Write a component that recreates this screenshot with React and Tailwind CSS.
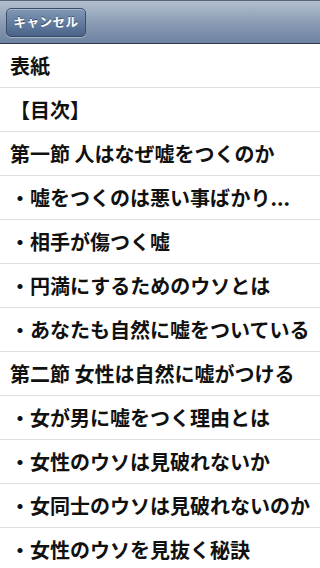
const items = [
  '表紙',
  '【目次】',
  '第一節 人はなぜ嘘をつくのか',
  '・嘘をつくのは悪い事ばかり...',
  '・相手が傷つく嘘',
  '・円満にするためのウソとは',
  '・あなたも自然に嘘をついている',
  '第二節 女性は自然に嘘がつける',
  '・女が男に嘘をつく理由とは',
  '・女性のウソは見破れないか',
  '・女同士のウソは見破れないのか',
  '・女性のウソを見抜く秘訣',
];

export default function App() {
  return (
    <div className="w-[320px] h-[568px] overflow-hidden bg-white font-['Noto_Sans_CJK_JP',sans-serif]">
      <header className="h-[44px] flex items-center px-[6px] border-t border-[#56657a] border-b border-b-[#2d3642] bg-gradient-to-b from-[#b3bfcf] via-[#8c9db5] to-[#6c83a1]">
        <button className="w-[80px] h-[29px] flex items-center justify-center rounded-[5px] border border-[#3b4c66] bg-gradient-to-b from-[#8198b6] to-[#4a6389] text-white text-[12.5px] tracking-[0.5px] font-bold leading-none shadow-[inset_0_1px_0_rgba(255,255,255,0.3),0_1px_0_rgba(255,255,255,0.35)] [text-shadow:0_-1px_0_rgba(0,0,0,0.45)]">
          キャンセル
        </button>
      </header>
      <ul>
        {items.map((item) => (
          <li
            key={item}
            className="h-[44px] flex items-center pl-[10px] pr-2 border-b border-[#e0e0e0] text-[20px] font-bold text-[#111] whitespace-nowrap overflow-hidden"
          >
            {item}
          </li>
        ))}
      </ul>
    </div>
  );
}
